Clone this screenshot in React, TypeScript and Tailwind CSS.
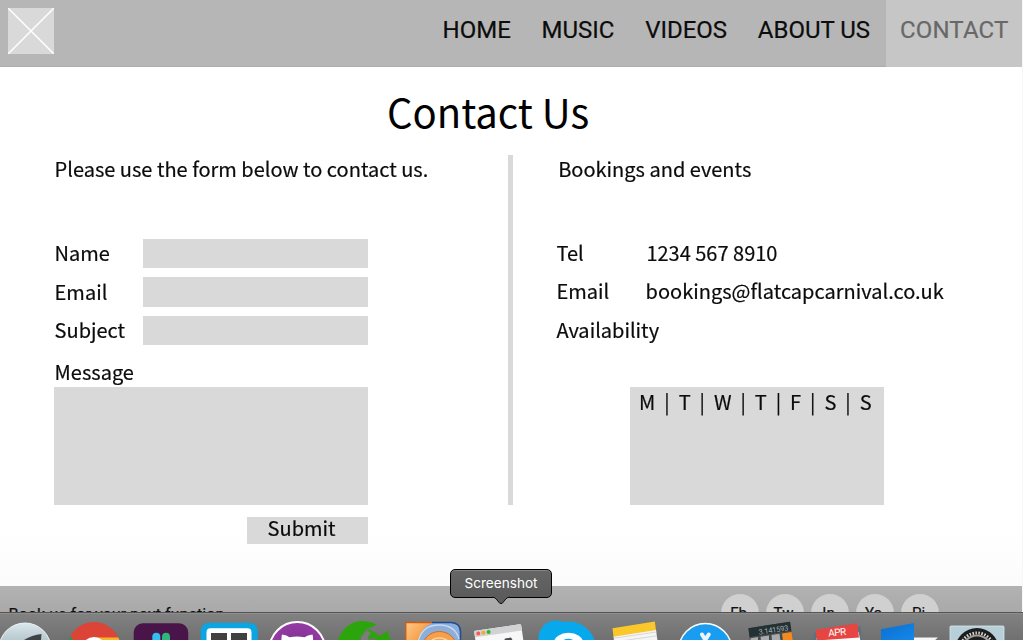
import React from "react";

const NAV = ["HOME", "MUSIC", "VIDEOS", "ABOUT US"];
const FIELDS = ["Name", "Email", "Subject"];
const SOCIAL = ["Fb", "Tw", "In", "Yo", "Pi"];

function Header() {
  return (
    <header className="flex h-[67px] w-[1022px] shrink-0 items-start border-b border-[#adadad] bg-[#b6b6b6]">
      <svg className="mt-2 ml-2 h-[46px] w-[46px] bg-[#d9d9d9]" viewBox="0 0 46 46">
        <path d="M0 0L46 46M46 0L0 46" stroke="#fff" strokeWidth="1.5" />
      </svg>
      <nav className="ml-auto flex h-[67px] font-[Roboto,sans-serif] text-[24px] leading-[28px] text-[#0c0c0c] [-webkit-text-stroke:0.2px]">
        {NAV.map((n) => (
          <a key={n} className="pt-4 pr-[15.9px] pl-[14.8px]">{n}</a>
        ))}
        <a className="w-[136px] bg-[#c6c6c6] pt-4 pl-[14px] tracking-[0.15px] text-[#686868]">CONTACT</a>
      </nav>
    </header>
  );
}

function ContactForm() {
  return (
    <section className="w-[507.5px] shrink-0 pt-[14px] pl-[54.3px]">
      <p className="pl-[0.3px]">Please use the form below to contact us.</p>
      <div className="mt-[55.8px] flex w-[313.4px] flex-col gap-[9px]">
        {FIELDS.map((f) => (
          <label key={f} className="flex h-[29.5px] items-start">
            <span className="-mt-[0.5px] w-[88.9px] pl-[0.3px]">{f}</span>
            <input className="h-[29.5px] min-w-0 flex-1 bg-[#d9d9d9] outline-none" />
          </label>
        ))}
      </div>
      <p className="mt-[12px] pl-[0.3px]">Message</p>
      <textarea className="mt-[1px] block h-[118px] w-[313.4px] resize-none bg-[#d9d9d9] outline-none" />
      <button className="mt-[11.7px] ml-[192.7px] block h-[26.8px] w-[120.7px] bg-[#d9d9d9] pl-[20.6px] text-left leading-[29px]">
        <span className="-mt-[6px] block">Submit</span>
      </button>
    </section>
  );
}

function Bookings() {
  return (
    <section className="pt-[14px] pl-[43.4px]">
      <p className="pl-[1.8px]">Bookings and events</p>
      <dl className="mt-[55.3px] grid grid-cols-[89.2px_auto] gap-y-[9.2px]">
        <dt>Tel</dt>
        <dd className="pl-[0.8px]">1234 567 8910</dd>
        <dt>Email</dt>
        <dd>bookings@flatcapcarnival.co.uk</dd>
        <dt>Availability</dt>
      </dl>
      <div className="mt-[43.6px] ml-[74px] h-[118px] w-[254px] bg-[#d9d9d9] pl-[8.7px] whitespace-pre">
        {"M  |  T  |  W  |  T  |  F  |  S  |  S"}
      </div>
    </section>
  );
}

function Footer() {
  return (
    <footer className="flex h-[54px] w-[1022px] shrink-0 justify-between bg-linear-to-b from-[#b2b2b2] to-[#a0a0a0] pr-[83px] pl-[8.5px] font-[Roboto,sans-serif] text-[#101010] [-webkit-text-stroke:0.2px]">
      <p className="pt-[19px] text-[16.2px] leading-[19px]">Book us for your next function</p>
      <div className="flex gap-[7px] pt-[8px]">
        {SOCIAL.map((s) => (
          <span key={s} className="h-[38px] w-[38px] rounded-full bg-[#d0d0d0] pt-[10px] pr-[3px] text-center text-[15px] leading-[19px]">{s}</span>
        ))}
      </div>
    </footer>
  );
}

function DockIcons() {
  return (
    <svg className="absolute inset-x-0 bottom-0 h-[28px] w-[1023px]" viewBox="0 612 1023 28">
      <defs>
        <linearGradient id="silver" x1="0" y1="0" x2="0" y2="1"><stop stopColor="#dbe7eb" /><stop offset="0.5" stopColor="#a5b8c0" /></linearGradient>
        <linearGradient id="orange" x1="0" y1="0" x2="1" y2="0.6"><stop stopColor="#ffc888" /><stop offset="1" stopColor="#f29335" /></linearGradient>
        <linearGradient id="azure" x1="0" y1="0" x2="1" y2="1"><stop stopColor="#0a6fd0" /><stop offset="1" stopColor="#1688ea" /></linearGradient>
        <radialGradient id="plum"><stop stopColor="#74318a" /><stop offset="1" stopColor="#963aa6" /></radialGradient>
        <clipPath id="chromeClip"><circle cx="94" cy="649" r="27" /></clipPath>
      </defs>

      <circle cx="25" cy="649" r="26" fill="url(#silver)" stroke="#eef5f7" strokeWidth="1" />
      <path d="M24 640Q32 635 41.500 634L41 640Z" fill="#3e4447" />

      <g clipPath="url(#chromeClip)">
        <rect x="66" y="620" width="56" height="22" fill="#dc4437" />
        <path d="M66 635L69 634.500L73 640V642H66Z" fill="#1c9c57" />
        <path d="M94 637.500H121V642H94Z" fill="#f5b52c" />
        <circle cx="94" cy="649.500" r="12.500" fill="#fff" />
      </g>

      <rect x="133.700" y="623.300" width="54.500" height="50" rx="9" fill="#481449" />
      <rect x="152.300" y="632.700" width="8" height="20" rx="4" fill="#35bdf0" />
      <rect x="162" y="632.700" width="8" height="20" rx="4" fill="#2eb67d" />

      <rect x="200.700" y="622.700" width="57" height="50" rx="8" fill="#0ba5e2" />
      <rect x="206.500" y="628.300" width="45" height="40" rx="4" fill="#fff" />
      <path d="M211 633H227V650H211ZM231 633H247V650H231Z" fill="#414141" />

      <circle cx="297.300" cy="650" r="28" fill="url(#plum)" stroke="#fff" strokeWidth="2" />
      <path d="M281.500 642Q281.300 637 282 634.500Q287 635 289.500 637.300Q297 635.500 304.500 637.300Q307.500 635 312.500 634.500Q313.300 637 313 642Z" fill="#fff" />

      <path d="M337 641Q346 621 362 621Q370 621 376.500 624.500L372 627L366 629L359 639L364 641ZM364 630L370 629.500L376 633.500L380 636L388 630.500L389 637L393 641H378L372 637L368 641H361Z" fill="#2ca50c" />
      <path d="M361 638L366 630L371 633L368 637L369 641H361Z" fill="#7c7c7c" />

      <path d="M405.800 641V622.500H432V641Z" fill="url(#orange)" stroke="#cd5a18" strokeWidth="1.300" />
      <path d="M418 641Q421 627 433 622.600H452Q460.500 623 460.500 632V641Z" fill="#8caedb" />
      <path d="M432 622.600H451Q460.500 623 460.500 632V641" fill="none" stroke="#204b91" strokeWidth="1.500" />
      <path d="M418.500 641Q422 625 439 625Q455 625 459 639" fill="none" stroke="#c7daf0" strokeWidth="1.300" />
      <circle cx="439.500" cy="649" r="17.500" fill="#f5a04e" stroke="#d46a22" strokeWidth="1" />
      <path d="M432 640Q439 636 447 640" fill="none" stroke="#ffd39b" strokeWidth="1.500" />

      <path d="M474.300 632.200Q474 631 475.300 630.800L519.500 624.300Q521 624.200 521.200 625.500L523.500 641H475.500Z" fill="#f7f7f7" />
      <path d="M474.300 632.200Q474 631 475.300 630.800L519.500 624.300Q521 624.200 521.200 625.500L522 630.500L475 637.200Z" fill="#d2d2d4" />
      <circle cx="478.300" cy="633.500" r="2" fill="#fb5754" />
      <circle cx="483.400" cy="632.800" r="2" fill="#f6a82b" />
      <circle cx="488.600" cy="632" r="2" fill="#28b832" />
      <path d="M504 641L505 638.500L511 637.500L513 641Z" fill="#4c4c4c" />

      <circle cx="556" cy="638" r="17.500" fill="#08a9ec" />
      <circle cx="568.500" cy="649" r="27.500" fill="#08a9ec" />
      <ellipse cx="568.500" cy="642.500" rx="14.500" ry="9.700" fill="#fff" />
      <path d="M562 641Q568 636.500 575 641Z" fill="#08a9ec" />

      <path d="M613.500 636L656 629.500L657.500 641H614Z" fill="#f5f5f5" />
      <path d="M612.500 628.300L654.800 621.500L656 630L613.500 636.700Z" fill="#fbc82c" />
      <path d="M614 638.200L656.300 632M624 640.500L657 635.800" stroke="#cccccc" strokeWidth="0.700" />

      <circle cx="705.300" cy="650" r="26.500" fill="#1a9df0" stroke="#fff" strokeWidth="1.500" />
      <path d="M702 634.500L708.500 645M708.700 634.500L702 645" stroke="#eaf6ff" strokeWidth="4" strokeLinecap="round" />

      <path d="M748.400 628.200L790 621.800L793 641H750Z" fill="#484b4c" />
      <path d="M748.400 628.200L790 621.800L791.300 630.500L749.600 637Z" fill="#233034" />
      <path d="M750.500 638.300L758 637V641H750.500ZM760.500 636.800L769 635.500V641H761ZM771.500 635L779.500 633.800L780.500 641H772Z" fill="#a9abac" />
      <path d="M782 633.500L791.600 632L793 641H783Z" fill="#f68820" />
      <text x="759" y="634.800" fill="#a3aeb0" fontFamily="Roboto, sans-serif" fontSize="7.500" textLength="30" transform="rotate(-8.500 759 634.800)">3.141593</text>

      <path d="M813.500 634L816 632L817 641H813.500ZM858 626L860.500 627L862 641H859Z" fill="#5c7280" />
      <path d="M816.500 638L858.500 632L860.500 641H817Z" fill="#fafafa" />
      <path d="M815.500 629.800L857.300 623.300L859 637.500L817 640.500Z" fill="#e64541" />
      <text x="828.500" y="636.500" fill="#fff" fontFamily="Roboto, sans-serif" fontSize="10" textLength="18" transform="rotate(-5 828.500 636.500)">APR</text>

      <path d="M913 637.500H938L934 641H913Z" fill="#f6f6f6" />
      <path d="M881 629.300L914 623V641H881Z" fill="url(#azure)" />
      <path d="M893 641Q897 637.500 901 641Z" fill="#167ddd" />

      <rect x="950" y="626" width="54" height="40" rx="1" fill="#b7cfd8" stroke="#d8e8ed" strokeWidth="0.800" />
      <circle cx="977" cy="650" r="22" fill="#1d1d1d" />
      <circle cx="977" cy="650" r="17" fill="none" stroke="#d8d8d8" strokeWidth="3" strokeDasharray="1.500 1.500" />
      <circle cx="977" cy="650" r="14.500" fill="none" stroke="#9d9d9d" strokeWidth="2" />
    </svg>
  );
}

function Dock() {
  return (
    <div className="absolute inset-x-0 bottom-0 h-[28px] border-t border-[#555555] bg-linear-to-b from-[#828282] to-[#707070] shadow-[inset_0_1px_0_#8e8e8e]">
      <DockIcons />
      <div className="absolute -top-[44px] left-[450px] h-[29px] w-[102px] rounded-[5px] border border-black bg-linear-to-b from-[#666666] to-[#5b5b5b] text-center font-[Inter,sans-serif] text-[13.6px] leading-[27px] text-white shadow-[inset_0_1px_0_#858585]">
        Screenshot
        <svg className="absolute top-[26px] left-[41px] h-[9px] w-[18px]" viewBox="0 0 18 9">
          <path d="M0 0H18V1Q15.500 1 14 2.800L10.500 7Q9 8.500 7.500 7L4 2.800Q2.500 1 0 1Z" fill="#5b5b5b" />
          <path d="M0 1.200Q2.500 1.200 4 2.800L7.500 7Q9 8.500 10.500 7L14 2.800Q15.500 1.200 18 1.200" fill="none" stroke="#111" />
        </svg>
      </div>
    </div>
  );
}

export default function App() {
  return (
    <div className="relative flex h-[640px] w-[1023px] flex-col overflow-hidden bg-[#f7f7f7]">
      <Header />
      <main className="flex h-[519px] w-[1022px] shrink-0 flex-col bg-linear-to-b from-white from-90% to-[#fbfbfb] font-['Noto_Sans_CJK_SC',sans-serif] text-[20px] leading-[29px] text-[#0b0b0b]">
        <h1 className="mt-[15px] pl-[387px] text-[40px] leading-[58px] text-black">Contact Us</h1>
        <div className="flex will-change-transform [-webkit-text-stroke:0.2px]">
          <ContactForm />
          <div className="mt-[15px] h-[350px] w-[5.500px] bg-[#d9d9d9]" />
          <Bookings />
        </div>
      </main>
      <Footer />
      <Dock />
    </div>
  );
}
